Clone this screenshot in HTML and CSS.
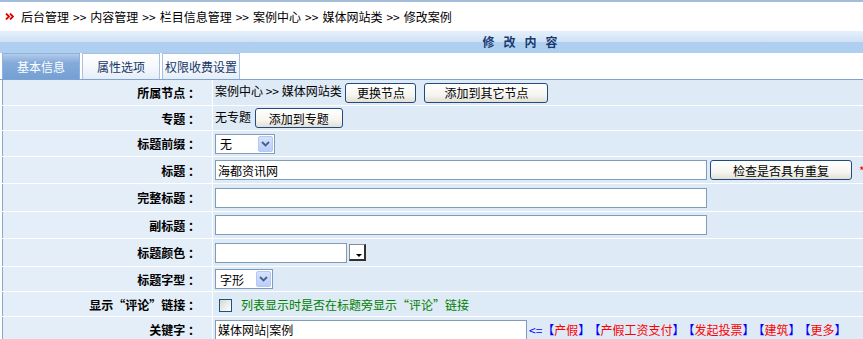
FILE: index.html
```html
<!DOCTYPE html>
<html lang="zh-CN">
<head>
    <meta charset="UTF-8">
    <title>修改案例</title>
    <link rel="stylesheet" href="styles.css">
</head>
<body>
    <div class="crumb">
        <svg class="crumb-icon" width="9" height="7" viewBox="0 0 9 7">
            <polyline points="1,0.5 4,3.5 1,6.5" fill="none" stroke="#e00000" stroke-width="1.8"/>
            <polyline points="5,0.5 8,3.5 5,6.5" fill="none" stroke="#e00000" stroke-width="1.8"/>
        </svg>
        <span>后台管理<i class="sep">&gt;&gt;</i>内容管理<i class="sep">&gt;&gt;</i>栏目信息管理<i class="sep">&gt;&gt;</i>案例中心<i class="sep">&gt;&gt;</i>媒体网站类<i class="sep">&gt;&gt;</i>修改案例</span>
    </div>
    <div class="page">
        <div class="title-bar">修改内容</div>
        <div class="tabs">
            <span class="tab active">基本信息</span>
            <span class="tab">属性选项</span>
            <span class="tab">权限收费设置</span>
        </div>
        <table class="form">
            <tr class="h26">
                <td class="label">所属节点 ：</td>
                <td class="value">案例中心 &gt;&gt; 媒体网站类 <button class="btn w71">更换节点</button><button class="btn w124 gap">添加到其它节点</button></td>
            </tr>
            <tr class="h25">
                <td class="label">专题 ：</td>
                <td class="value">无专题 <button class="btn w88">添加到专题</button></td>
            </tr>
            <tr class="h26">
                <td class="label">标题前缀 ：</td>
                <td class="value">
                    <span class="sel w60">无<span class="sel-arrow"><svg width="9" height="6" viewBox="0 0 9 6"><polyline points="1,1 4.5,4.5 8,1" fill="none" stroke="#4a5e86" stroke-width="1.8"/></svg></span></span>
                </td>
            </tr>
            <tr class="h27">
                <td class="label">标题 ：</td>
                <td class="value"><input class="txt w492" type="text" value="海都资讯网"><button class="btn w142 gap3">检查是否具有重复</button><span class="star">*</span></td>
            </tr>
            <tr class="h28">
                <td class="label">完整标题 ：</td>
                <td class="value"><input class="txt w492" type="text"></td>
            </tr>
            <tr class="h27">
                <td class="label">副标题 ：</td>
                <td class="value"><input class="txt w492" type="text"></td>
            </tr>
            <tr class="h28">
                <td class="label">标题颜色 ：</td>
                <td class="value"><input class="txt w132" type="text"><span class="color-btn"><span class="color-tri"></span></span></td>
            </tr>
            <tr class="h25">
                <td class="label">标题字型 ：</td>
                <td class="value">
                    <span class="sel w58">字形<span class="sel-arrow"><svg width="9" height="6" viewBox="0 0 9 6"><polyline points="1,1 4.5,4.5 8,1" fill="none" stroke="#4a5e86" stroke-width="1.8"/></svg></span></span>
                </td>
            </tr>
            <tr class="h25">
                <td class="label">显示“评论”链接 ：</td>
                <td class="value"><span class="check"></span><span class="hint">列表显示时是否在标题旁显示“评论”链接</span></td>
            </tr>
            <tr class="h26">
                <td class="label">关键字 ：</td>
                <td class="value"><input class="txt w312" type="text" value="媒体网站|案例"><span class="pick">&lt;=</span><span class="kw">【<a>产假</a>】</span><span class="kw">【<a>产假工资支付</a>】</span><span class="kw">【<a>发起投票</a>】</span><span class="kw">【<a>建筑</a>】</span><span class="kw">【<a>更多</a>】</span></td>
            </tr>
        </table>
    </div>
</body>
</html>
```

FILE: styles.css
```css
html, body {
    overflow: hidden;
}
body {
    margin: 0;
    padding: 0;
    font-family: "Noto Sans CJK SC", "Liberation Sans", sans-serif;
    font-size: 12px;
    color: #000;
    background-color: #fff;
    border-top: 2px solid #a3bcd9;
}
.crumb {
    height: 29px;
    display: flex;
    align-items: center;
    padding-left: 5px;
}
.crumb-icon {
    margin-right: 7px;
}
.crumb .sep {
    font-style: normal;
    padding: 0 4px;
}
.page {
    width: 1040px;
}
.title-bar {
    height: 22px;
    line-height: 22px;
    text-align: center;
    font-weight: bold;
    letter-spacing: 9px;
    padding-left: 9px;
    color: #173a70;
    background: linear-gradient(#e6f0fb, #cfe1f6 50%, #afcff1 50%, #afcff1);
}
.tabs {
    display: flex;
    gap: 2px;
    padding-left: 2px;
    height: 26px;
    border-bottom: 1px solid #7fa2cf;
}
.tab {
    width: 78px;
    box-sizing: border-box;
    display: flex;
    align-items: center;
    justify-content: center;
    border: 1px solid #a6c1e3;
    border-bottom: none;
    background: linear-gradient(#ffffff, #f3f7fc 60%, #e4edf8);
    color: #163566;
}
.tab.active {
    border-color: #8fb1dc;
    color: #fff;
    background: linear-gradient(#b2cbea, #84abdb 35%, #74a0d5);
}
.form {
    width: 1038px;
    margin-left: 2px;
    border-left: 1px solid #87a8d2;
    border-collapse: collapse;
}
.form td {
    padding: 0;
    border: 1px solid #fff;
    border-left: none;
    border-top: none;
    background-color: #deeaf6;
}
.form tr.h25 td { height: 24px; }
.form tr.h26 td { height: 25px; }
.form tr.h27 td { height: 26px; }
.form tr.h28 td { height: 27px; }
.form td.label {
    width: 197px;
    padding-right: 12px;
    text-align: right;
    font-weight: bold;
    white-space: nowrap;
    background-color: #e3eef8;
}
.form td.value {
    padding-left: 2px;
    white-space: nowrap;
}
.txt {
    box-sizing: border-box;
    height: 20px;
    border: 1px solid #7f9db9;
    padding: 0 2px;
    font-family: inherit;
    font-size: 12px;
    vertical-align: middle;
    background-color: #fff;
}
.w492 { width: 492px; }
.w312 { width: 312px; }
.w132 { width: 132px; }
.btn {
    box-sizing: border-box;
    height: 20px;
    padding: 0;
    border: 1px solid #234a7c;
    border-radius: 3px;
    background: linear-gradient(#ffffff, #f6f5f0 60%, #e2e0d6);
    font-family: inherit;
    font-size: 12px;
    color: #000;
    vertical-align: middle;
}
.w71 { width: 71px; margin-left: 1px; }
.w88 { width: 88px; margin-left: 1px; }
.w124 { width: 124px; }
.w142 { width: 142px; }
.gap { margin-left: 8px; }
.gap3 { margin-left: 3px; }
.star {
    color: #f00;
    margin-left: 7px;
    vertical-align: middle;
}
.sel {
    box-sizing: border-box;
    display: inline-flex;
    align-items: center;
    justify-content: space-between;
    height: 20px;
    border: 1px solid #7f9db9;
    background-color: #fff;
    padding-left: 4px;
    padding-right: 1px;
    vertical-align: middle;
}
.w60 { width: 60px; }
.w58 { width: 58px; }
.sel-arrow {
    box-sizing: border-box;
    width: 15px;
    height: 16px;
    display: flex;
    align-items: center;
    justify-content: center;
    border: 1px solid #b5c8f3;
    border-radius: 2px;
    background: linear-gradient(#d6e2fd, #b9cdfa);
}
.color-btn {
    box-sizing: border-box;
    display: inline-block;
    position: relative;
    width: 17px;
    height: 17px;
    margin-left: 2px;
    vertical-align: middle;
    background-color: #fff;
    border-top: 1px solid #8a8a8a;
    border-left: 1px solid #8a8a8a;
    border-right: 2px solid #303030;
    border-bottom: 2px solid #303030;
}
.color-tri {
    position: absolute;
    right: 2px;
    bottom: 2px;
    width: 0;
    height: 0;
    border-left: 3px solid transparent;
    border-right: 3px solid transparent;
    border-top: 3px solid #000;
}
.check {
    box-sizing: border-box;
    display: inline-block;
    width: 13px;
    height: 13px;
    margin-left: 4px;
    margin-right: 9px;
    vertical-align: middle;
    border: 1px solid #1c5180;
    background: linear-gradient(135deg, #d8d8d2, #ffffff);
}
.hint {
    color: #008000;
    vertical-align: middle;
}
.pick {
    color: #00f;
    margin-left: 2px;
    vertical-align: middle;
}
.kw {
    color: #00f;
    margin-right: 4px;
    vertical-align: middle;
}
.kw a {
    color: #f00;
}
```
